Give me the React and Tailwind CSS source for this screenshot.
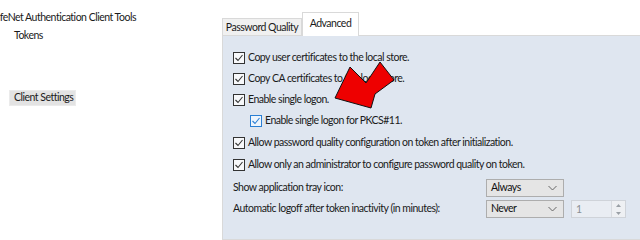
const CHECKS = [
  { label: 'Copy user certificates to the local store.', h: 'h-[21px]', indent: false },
  { label: 'Copy CA certificates to the local store.', h: 'h-[21px]', indent: false },
  { label: 'Enable single logon.', h: 'h-[21px]', indent: false },
  { label: 'Enable single logon for PKCS#11.', h: 'h-[22px]', indent: true, blue: true },
  { label: 'Allow password quality configuration on token after initialization.', h: 'h-[22px]', indent: false },
  { label: 'Allow only an administrator to configure password quality on token.', h: 'h-[21px]', indent: false },
];

const CheckBox = ({ blue }) => (
  <span
    className={`w-[12px] h-[12px] shrink-0 flex items-center justify-center border ${
      blue ? 'border-[#2a7fd4] bg-[#eef5fd]' : 'border-[#333333] bg-[#f7f8fa]'
    }`}
  >
    <svg width="10" height="10" viewBox="0 0 10 10">
      <polyline points="1.5,5 4,7.5 8.5,2" fill="none" stroke={blue ? '#2a7fd4' : '#333333'} strokeWidth="1.1" />
    </svg>
  </span>
);

const Combo = ({ value }) => (
  <div className="w-[78px] h-[18px] flex items-center justify-between border border-[#adadad] bg-[#e5e5e5] pl-[4px] pr-[6px] text-[#111]">
    <span>{value}</span>
    <svg width="9" height="6" viewBox="0 0 9 6">
      <polyline points="0.5,1 4.5,5 8.5,1" fill="none" stroke="#666" strokeWidth="1" />
    </svg>
  </div>
);

const Spinner = () => (
  <div className="w-[55px] h-[18px] flex border border-[#cfd3d9] bg-[#e9edf3] ml-[7px]">
    <span className="flex-1 pl-[4px] text-[#8a8f96] leading-[16px]">1</span>
    <div className="w-[14px] flex flex-col border-l border-[#d8dbe0] bg-[#eef0f3]">
      <div className="flex-1 flex items-center justify-center">
        <svg width="5" height="3" viewBox="0 0 5 3"><polygon points="0,3 2.5,0 5,3" fill="#9aa0a6" /></svg>
      </div>
      <div className="flex-1 flex items-center justify-center">
        <svg width="5" height="3" viewBox="0 0 5 3"><polygon points="0,0 2.5,3 5,0" fill="#9aa0a6" /></svg>
      </div>
    </div>
  </div>
);

export default function App() {
  return (
    <div className="w-[640px] h-[240px] bg-white flex overflow-hidden relative font-['Lato','Liberation_Sans',sans-serif] text-[10.5px] tracking-[-0.5px] text-[#1a1a1a]">
      {/* tree pane */}
      <div className="w-[222px] shrink-0 flex flex-col overflow-hidden">
        <div className="mt-[10px] -ml-[10px] leading-[14px] whitespace-nowrap">SafeNet Authentication Client Tools</div>
        <div className="mt-[4px] ml-[14px] leading-[14px]">Tokens</div>
        <div className="mt-[48px] ml-[9px] w-[67px] h-[16px] flex items-center pl-[4px] bg-[#e3e3e3] border border-[#ebebeb] whitespace-nowrap">
          Client Settings
        </div>
      </div>

      {/* tab control */}
      <div className="flex flex-col shrink-0 w-[440px]">
        <div className="h-[35px] flex items-end">
          <div className="w-[80px] h-[18px] flex items-center justify-center border border-b-0 border-[#d9d9d9] bg-[#f0f0f0] mb-[-1px] whitespace-nowrap">
            Password Quality
          </div>
          <div className="w-[57px] h-[24px] flex items-center justify-center border border-b-0 border-[#d9d9d9] bg-white mb-[-1px] relative z-10 pb-[2px]">
            Advanced
          </div>
        </div>
        <div className="flex-1 border border-[#d9d9d9] bg-[#dfe6f0] pt-[11px] pl-[10px]">
          {CHECKS.map((c) => (
            <div key={c.label} className={`${c.h} flex items-center gap-[3px] whitespace-nowrap ${c.indent ? 'pl-[17px]' : ''}`}>
              <CheckBox blue={c.blue} />
              <span>{c.label}</span>
            </div>
          ))}
          <div className="mt-[4px] h-[18px] flex items-center">
            <span className="w-[253px] whitespace-nowrap">Show application tray icon:</span>
            <Combo value="Always" />
          </div>
          <div className="mt-[3px] h-[18px] flex items-center">
            <span className="w-[253px] whitespace-nowrap">Automatic logoff after token inactivity (in minutes):</span>
            <Combo value="Never" />
            <Spinner />
          </div>
        </div>
      </div>

      {/* red annotation arrow */}
      <svg className="absolute left-0 top-0 pointer-events-none" width="640" height="240" viewBox="0 0 640 240">
        <polygon
          points="335,98 350,67 366,83 380,62 394,80 375,94 371,108"
          fill="#ee0000"
          stroke="#111"
          strokeWidth="1"
          strokeLinejoin="round"
        />
      </svg>
    </div>
  );
}
